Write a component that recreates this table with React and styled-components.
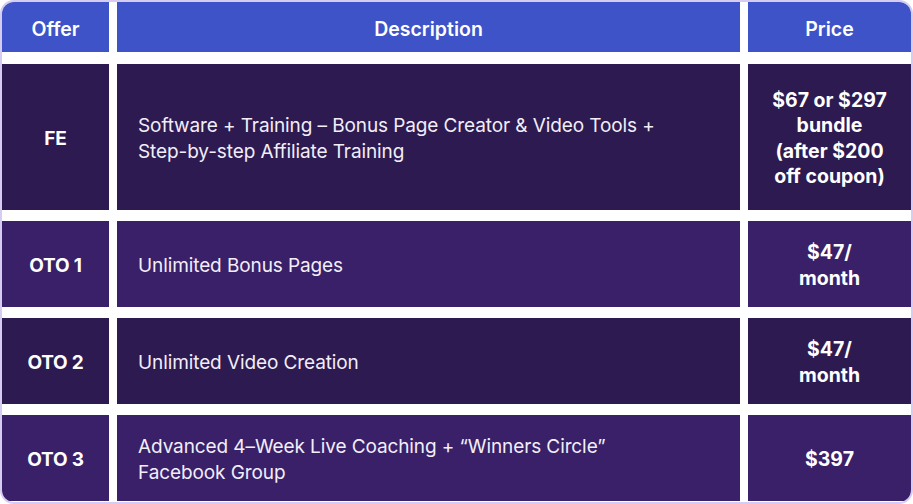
import React from "react";
import styled, { createGlobalStyle } from "styled-components";

const Global = createGlobalStyle`
  html, body { margin: 0; padding: 0; background: #ffffff; }
  body { font-family: Inter, "Noto Sans", sans-serif; }
`;

const Frame = styled.div`
  width: 913px;
  height: 504px;
  box-sizing: border-box;
  border: 2px solid #d6ccf2;
  border-radius: 14px;
  overflow: hidden;
  background: #ffffff;
`;

const Grid = styled.div`
  display: grid;
  grid-template-columns: 107px 623px 163px;
  grid-template-rows: 51px 146px 86px 86px 86px;
  column-gap: 8px;
  row-gap: 11px;
  height: 100%;
  & > :nth-child(-n + 3) { margin-bottom: 1px; }
`;

const HeadCell = styled.div`
  background: #3d53c7;
  color: #ffffff;
  font-size: 19.5px;
  font-weight: 600;
  display: flex;
  align-items: center;
  justify-content: center;
  padding-top: 3px;
  box-sizing: border-box;
`;

const Cell = styled.div`
  background: ${(p) => (p.$alt ? "#392069" : "#2d1a50")};
  color: #ffffff;
  display: flex;
  align-items: center;
  font-size: 19px;
  line-height: 25.5px;
  padding-top: 3px;
  box-sizing: border-box;
`;

const OfferCell = styled(Cell)`
  justify-content: center;
  font-weight: 700;
  letter-spacing: -0.2px;
`;

const DescCell = styled(Cell)`
  padding-left: 21px;
  padding-right: 20px;
  font-weight: 400;
  color: #f2eef8;
  letter-spacing: -0.1px;
`;

const PriceCell = styled(Cell)`
  justify-content: center;
  text-align: center;
  font-weight: 700;
  font-size: 19.5px;
  padding-left: 8px;
  padding-right: 8px;
`;

const rows = [
  {
    offer: "FE",
    desc: ["Software + Training – Bonus Page Creator & Video Tools +", "Step-by-step Affiliate Training"],
    price: ["$67 or $297", "bundle", "(after $200", "off coupon)"],
  },
  { offer: "OTO 1", desc: ["Unlimited Bonus Pages"], price: ["$47/", "month"] },
  { offer: "OTO 2", desc: ["Unlimited Video Creation"], price: ["$47/", "month"] },
  {
    offer: "OTO 3",
    desc: ["Advanced 4–Week Live Coaching + “Winners Circle”", "Facebook Group"],
    price: ["$397"],
  },
];

const Lines = ({ lines }) => (
  <div>
    {lines.map((l, i) => (
      <div key={i}>{l}</div>
    ))}
  </div>
);

export default function App() {
  return (
    <>
      <Global />
      <Frame>
        <Grid>
          <HeadCell>Offer</HeadCell>
          <HeadCell>Description</HeadCell>
          <HeadCell>Price</HeadCell>
          {rows.map((r, i) => (
            <React.Fragment key={r.offer}>
              <OfferCell $alt={i % 2 === 1}>{r.offer}</OfferCell>
              <DescCell $alt={i % 2 === 1}>
                <Lines lines={r.desc} />
              </DescCell>
              <PriceCell $alt={i % 2 === 1}>
                <Lines lines={r.price} />
              </PriceCell>
            </React.Fragment>
          ))}
        </Grid>
      </Frame>
    </>
  );
}
